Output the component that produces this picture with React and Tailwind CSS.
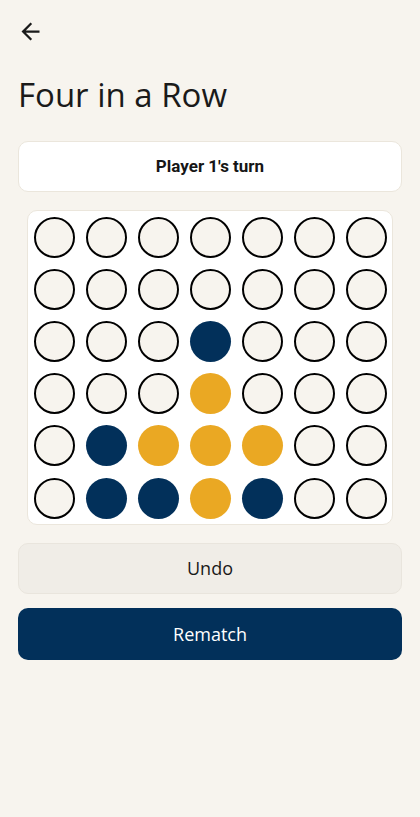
const N = "navy";
const Y = "yellow";
const E = null;

const board = [
  [E, E, E, E, E, E, E],
  [E, E, E, E, E, E, E],
  [E, E, E, N, E, E, E],
  [E, E, E, Y, E, E, E],
  [E, N, Y, Y, Y, E, E],
  [E, N, N, Y, N, E, E],
];

function Disc({ value }) {
  if (value === N) return <div className="w-[41px] h-[41px] rounded-full bg-[#02305a]" />;
  if (value === Y) return <div className="w-[41px] h-[41px] rounded-full bg-[#eaa823]" />;
  return <div className="w-[41px] h-[41px] rounded-full bg-[#f7f4ee] border-[2.5px] border-black" />;
}

export default function App() {
  return (
    <div
      className="min-h-[817px] bg-[#f7f4ee] text-[#1a1a1a] px-[18px]"
      style={{ fontFamily: '"Open Sans", "Noto Sans", sans-serif' }}
    >
      {/* Back */}
      <div className="pt-[18px] h-[58px]">
        <svg width="27" height="27" viewBox="0 0 24 24" className="-ml-[1px] text-[#1a1a1a]" fill="currentColor">
          <path d="M20 11H7.83l5.59-5.59L12 4l-8 8 8 8 1.41-1.41L7.83 13H20v-2z" />
        </svg>
      </div>

      {/* Title */}
      <h1 className="text-[33px] leading-[48px] mt-[13px]">Four in a Row</h1>

      {/* Status */}
      <div
        className="mt-[22px] h-[51px] bg-white rounded-[10px] border border-[#ebe6dc] flex items-center justify-center text-[17px] font-bold text-[#161616]"
        style={{ fontFamily: 'Roboto, "Noto Sans", sans-serif' }}
      >
        Player 1's turn
      </div>

      {/* Board */}
      <div className="mt-[18px] mx-auto w-[366px] bg-white rounded-[10px] border border-[#ebe6dc] grid grid-cols-7">
        {board.flat().map((v, i) => (
          <div key={i} className="h-[52.2px] flex items-center justify-center">
            <Disc value={v} />
          </div>
        ))}
      </div>

      {/* Buttons */}
      <button className="mt-[18px] w-full h-[51px] rounded-[10px] bg-[#f0ede7] border border-[#e9e5dd] text-[18px] text-[#1a1a1a]">
        Undo
      </button>
      <button className="mt-[14px] w-full h-[52px] rounded-[10px] bg-[#02305a] text-[18px] text-white">
        Rematch
      </button>
    </div>
  );
}
